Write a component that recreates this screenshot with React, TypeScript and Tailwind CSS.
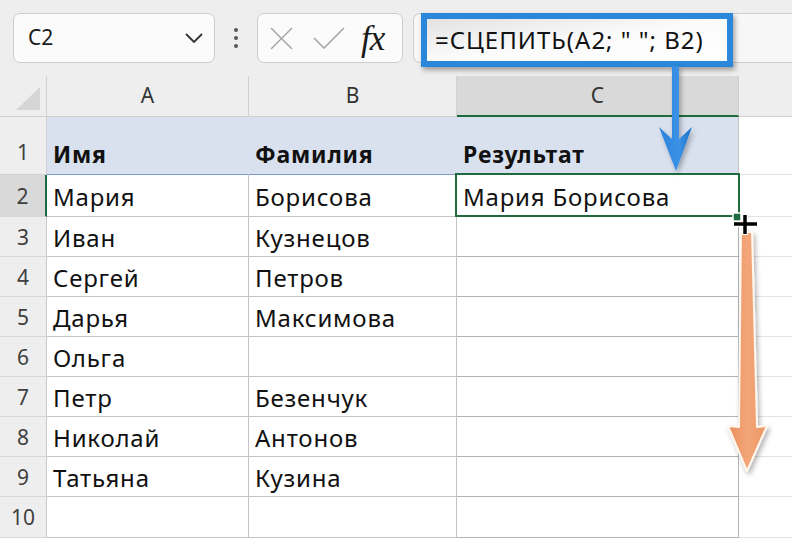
import React from "react";

type Row = { n: number; a: string; b: string; c: string };

const rows: Row[] = [
  { n: 2, a: "Мария", b: "Борисова", c: "Мария Борисова" },
  { n: 3, a: "Иван", b: "Кузнецов", c: "" },
  { n: 4, a: "Сергей", b: "Петров", c: "" },
  { n: 5, a: "Дарья", b: "Максимова", c: "" },
  { n: 6, a: "Ольга", b: "", c: "" },
  { n: 7, a: "Петр", b: "Безенчук", c: "" },
  { n: 8, a: "Николай", b: "Антонов", c: "" },
  { n: 9, a: "Татьяна", b: "Кузина", c: "" },
  { n: 10, a: "", b: "", c: "" },
];

function Toolbar() {
  return (
    <div className="relative h-[76px] bg-[#eeeeee] flex items-start pt-[13px] pl-[13px]">
      {/* Name box */}
      <div className="w-[202px] h-[50px] rounded-[7px] border border-[#cdcdcd] bg-[#fbfbfb] flex items-center justify-between pl-[14px] pr-[11px]">
        <span className="text-[21px] text-[#1a1a1a]">C2</span>
        <svg width="18" height="10" viewBox="0 0 18 10">
          <polyline points="1,1 9,9 17,1" fill="none" stroke="#333" strokeWidth="1.8" />
        </svg>
      </div>

      {/* dots */}
      <div className="w-[42px] h-[50px] flex flex-col items-center justify-center gap-[4px]">
        <div className="w-[4px] h-[4px] rounded-full bg-[#555]" />
        <div className="w-[4px] h-[4px] rounded-full bg-[#555]" />
        <div className="w-[4px] h-[4px] rounded-full bg-[#555]" />
      </div>

      {/* cancel / enter / fx */}
      <div className="w-[146px] h-[50px] rounded-[7px] border border-[#cdcdcd] bg-[#fbfbfb] flex items-center pl-[12px]">
        <svg width="23" height="23" viewBox="0 0 23 23">
          <line x1="1" y1="1" x2="22" y2="22" stroke="#a3a3a3" strokeWidth="1.5" />
          <line x1="22" y1="1" x2="1" y2="22" stroke="#a3a3a3" strokeWidth="1.5" />
        </svg>
        <svg className="ml-[20px]" width="32" height="22" viewBox="0 0 32 22">
          <polyline points="1,11 11,21 31,1" fill="none" stroke="#a3a3a3" strokeWidth="1.5" />
        </svg>
        <span className="ml-[16px] font-['Liberation_Serif',serif] italic text-[35px] leading-none text-[#1a1a1a] tracking-[-1px]">
          fx
        </span>
      </div>

      {/* formula bar */}
      <div className="ml-[10px] flex-1 h-[50px] rounded-l-[7px] border border-r-0 border-[#cdcdcd] bg-[#f7f7f7]" />

      {/* highlighted formula */}
      <div className="absolute left-[421px] top-[13px] w-[312px] h-[54px] border-[6px] border-[#2b87da] bg-gradient-to-br from-[#e2e2e2] via-[#fbfbfb] to-white shadow-[2px_3px_5px_rgba(0,0,0,0.35)] flex items-center pl-[8px]">
        <span className="text-[24px] tracking-[1px] text-[#111] whitespace-pre">=СЦЕПИТЬ(A2; " "; B2)</span>
      </div>
    </div>
  );
}

function HeaderRow() {
  return (
    <>
      <div className="h-[41px] bg-[#eeeeee] border-r border-b border-[#d0d0d0] flex items-end justify-end pr-[6px] pb-[6px]">
        <svg width="24" height="23" viewBox="0 0 24 23">
          <polygon points="24,0 24,23 0,23" fill="#d6d6d6" />
        </svg>
      </div>
      <div className="h-[41px] bg-[#eeeeee] border-r border-b border-[#d0d0d0] flex items-center justify-center text-[21px] text-[#333]">
        A
      </div>
      <div className="h-[41px] bg-[#eeeeee] border-r border-b border-[#d0d0d0] flex items-center justify-center text-[21px] text-[#333]">
        B
      </div>
      <div className="h-[41px] bg-[#d9d9d9] border-r border-[#d0d0d0] border-b-2 border-b-[#1e6b40] flex items-center justify-center text-[21px] text-[#333]">
        C
      </div>
      <div className="h-[41px] bg-[#eeeeee] border-b border-[#d0d0d0]" />
    </>
  );
}

function TitleRow() {
  return (
    <>
      <div className="h-[58px] bg-[#eeeeee] border-r border-b border-[#d0d0d0] flex items-end justify-center pb-[6px] text-[21px] text-[#404040]">
        1
      </div>
      <div className="h-[58px] bg-[#d9e1ee] border-r border-r-[#d9e1ee] border-b border-b-[#7f9bc6] flex items-end pl-[6px] pb-[3px] text-[23px] tracking-[0.8px] font-bold text-[#111]">
        Имя
      </div>
      <div className="h-[58px] bg-[#d9e1ee] border-r border-r-[#d9e1ee] border-b border-b-[#7f9bc6] flex items-end pl-[6px] pb-[3px] text-[23px] tracking-[0.8px] font-bold text-[#111]">
        Фамилия
      </div>
      <div className="h-[58px] bg-[#d9e1ee] border-r border-r-[#c4c4c4] border-b border-b-[#7f9bc6] flex items-end pl-[6px] pb-[3px] text-[23px] tracking-[0.8px] font-bold text-[#111]">
        Результат
      </div>
      <div className="h-[58px] bg-white border-b border-[#e2e2e2]" />
    </>
  );
}

function DataRow({ row }: { row: Row }) {
  const selected = row.n === 2;
  const h = row.n === 2 ? "h-[42px]" : row.n === 10 ? "h-[41px]" : "h-[40px]";
  return (
    <>
      <div
        className={`${h} border-b border-[#d8d8d8] flex items-center justify-center pt-[2px] text-[21px] text-[#404040] ${
          selected ? "bg-[#d9d9d9] border-r-2 border-r-[#1e6b40]" : "bg-[#eeeeee] border-r border-r-[#c8c8c8]"
        }`}
      >
        {row.n}
      </div>
      <div className={`${h} border-r border-b border-[#c4c4c4] flex items-center pl-[6px] pt-[3px] text-[24px] tracking-[0.8px] text-[#111] whitespace-nowrap`}>
        {row.a}
      </div>
      <div className={`${h} border-r border-b border-[#c4c4c4] flex items-center pl-[6px] pt-[3px] text-[24px] tracking-[0.8px] text-[#111] whitespace-nowrap`}>
        {row.b}
      </div>
      <div className={`${h} relative border-r border-b border-[#b4b4b4] flex items-center pl-[6px] pt-[3px] text-[24px] tracking-[0.8px] text-[#111] whitespace-nowrap`}>
        {row.c}
        {selected && (
          <div className="absolute -left-[2px] -top-[2px] -right-[2px] -bottom-[1px] border-2 border-[#1e6b40]" />
        )}
      </div>
      <div className={`${h} border-b border-[#e2e2e2] bg-white`} />
    </>
  );
}

function Annotations() {
  return (
    <svg className="absolute inset-0 pointer-events-none" width="792" height="538" viewBox="0 0 792 538">
      <defs>
        <linearGradient id="orange" x1="0" y1="0" x2="1" y2="0">
          <stop offset="0" stopColor="#e98d5c" />
          <stop offset="0.5" stopColor="#f3a679" />
          <stop offset="1" stopColor="#ec9663" />
        </linearGradient>
        <linearGradient id="blue" x1="0" y1="0" x2="1" y2="0">
          <stop offset="0" stopColor="#2a82dc" />
          <stop offset="0.6" stopColor="#3b92e6" />
          <stop offset="1" stopColor="#1f6fc4" />
        </linearGradient>
        <filter id="sh" x="-50%" y="-10%" width="200%" height="130%">
          <feDropShadow dx="2" dy="3" stdDeviation="2.5" floodColor="#000" floodOpacity="0.3" />
        </filter>
      </defs>

      {/* blue arrow */}
      <path
        d="M672 66 L679 66 L679 139 L692 127 L676 171 L659 127 L672 139 Z"
        fill="url(#blue)"
        filter="url(#sh)"
      />

      {/* orange arrow */}
      <path
        d="M741 232 L752 232 L757 427 L767 426 L747 471 L728 426 L739 427 Z"
        fill="url(#orange)"
        stroke="#fff6ee"
        strokeWidth="2"
        strokeLinejoin="round"
        filter="url(#sh)"
      />

      {/* fill handle */}
      <rect x="733" y="213" width="8" height="8" fill="#1e6b40" stroke="#ffffff" strokeWidth="1.5" />

      {/* fill cursor */}
      <path d="M733 224 H758 M745 214 V235" stroke="#ffffff" strokeWidth="6" />
      <path d="M734 224 H757 M745 215 V234" stroke="#000000" strokeWidth="3.5" />
    </svg>
  );
}

export default function App() {
  return (
    <div className="relative w-[792px] h-[538px] overflow-hidden bg-white font-['Noto_Sans',sans-serif]">
      <Toolbar />
      <div className="grid grid-cols-[47px_202px_208px_282px_53px]">
        <HeaderRow />
        <TitleRow />
        {rows.map((r) => (
          <DataRow key={r.n} row={r} />
        ))}
      </div>
      <Annotations />
    </div>
  );
}
